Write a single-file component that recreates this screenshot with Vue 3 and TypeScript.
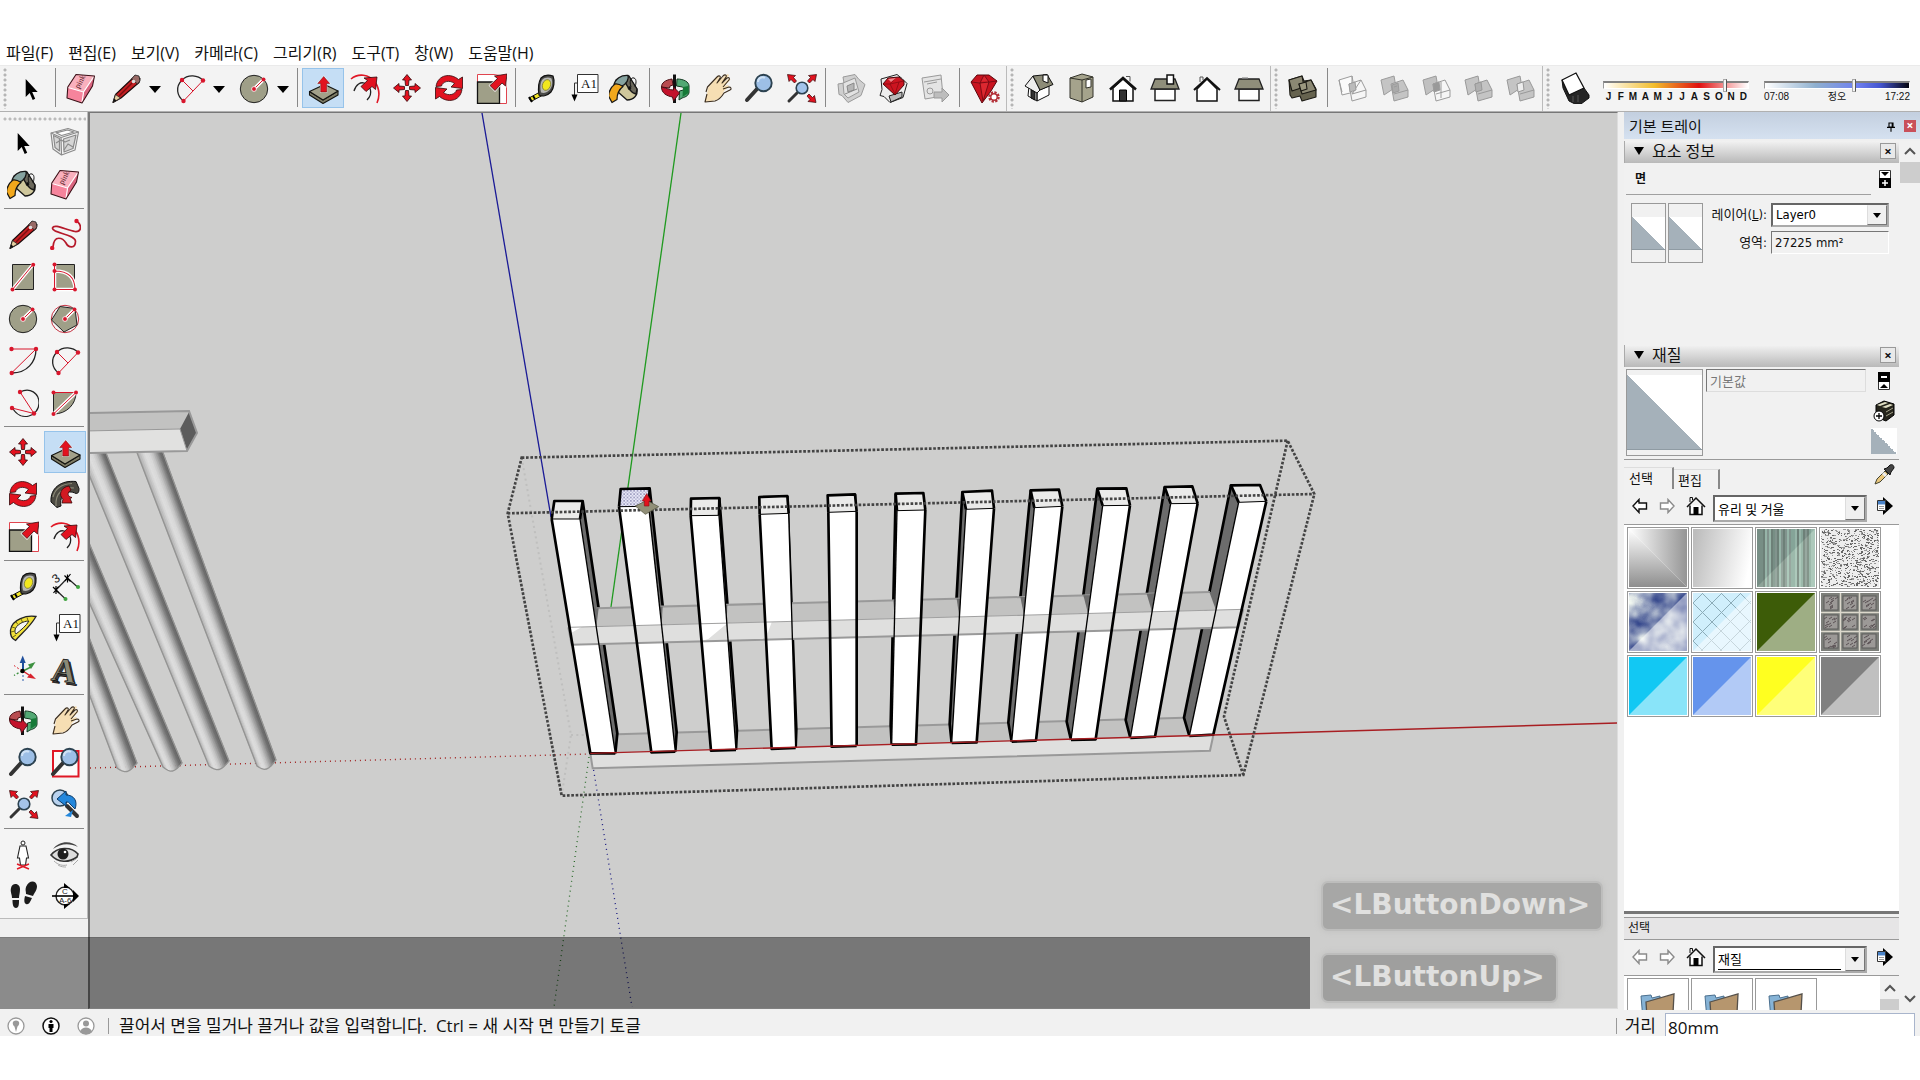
<script setup lang="ts">
import { ref } from 'vue'

interface Tool { icon: string; label: string; active?: boolean; menu?: boolean }
type Point = [number, number]

const menus = ['파일(F)', '편집(E)', '보기(V)', '카메라(C)', '그리기(R)', '도구(T)', '창(W)', '도움말(H)']

const t = (icon: string, label: string, extra: Partial<Tool> = {}): Tool => ({ icon, label, ...extra })

// Each bar is split by a grip, and each bar is made of groups split by a rule.
const bars: Tool[][][] = [
  [
    [t('select', '선택')],
    [t('eraser', '지우개'), t('pencil', '선', { menu: true }), t('arc', '호', { menu: true }), t('circle', '원', { menu: true })],
    [t('pushpull', '밀기/끌기', { active: true }), t('offset', '오프셋'), t('move', '이동'), t('rotate', '회전'), t('scale', '배율')],
    [t('tape', '줄자'), t('text', '텍스트'), t('bucket', '페인트 통')],
    [t('orbit', '궤도'), t('hand', '이동 보기'), t('zoom', '확대/축소'), t('extents', '범위 확대')],
    [t('wareoff', '모델 가져오기'), t('ware', '웨어하우스'), t('share', '모델 공유')],
    [t('ruby', '확장 프로그램')],
  ],
  [[t('iso', '등각'), t('top', '평면'), t('front', '정면'), t('right', '우측면'), t('back', '후면'), t('left', '좌측면')]],
  [
    [t('shell', '외부 셸')],
    [t('solid1', '교차'), t('solid2', '결합'), t('solid3', '빼기'), t('solid4', '다듬기'), t('solid5', '분할')],
  ],
  [[t('shadow', '그림자')]],
]

const palette: Tool[][] = [
  [t('select', '선택'), t('component', '구성 요소'), t('bucket', '페인트 통'), t('eraser', '지우개')],
  [t('pencil', '선'), t('freehand', '자유 곡선'), t('rect', '사각형'), t('rotrect', '회전 사각형'), t('circle', '원'), t('polygon', '다각형'),
    t('arc1', '호'), t('arc', '2점 호'), t('arc3', '3점 호'), t('pie', '파이')],
  [t('move', '이동'), t('pushpull', '밀기/끌기', { active: true }), t('rotate', '회전'), t('follow', '따라가기'), t('scale', '배율'), t('offset', '오프셋')],
  [t('tape', '줄자'), t('dimension', '치수'), t('protractor', '각도기'), t('text', '텍스트'), t('axes', '축'), t('text3d', '3D 텍스트')],
  [t('orbit', '궤도'), t('hand', '이동 보기'), t('zoom', '확대/축소'), t('zoomwin', '창 확대'), t('extents', '범위 확대'), t('previous', '이전')],
  [t('camera', '카메라 배치'), t('eye', '둘러보기'), t('walk', '걷기'), t('section', '단면')],
]

const months = 'JFMAMJJASOND'.split('')
const month = ref(85)
const hour = ref(62)
const layer = ref('Layer0')
const library = ref('유리 및 거울')
const library2 = ref('재질')
const materialName = ref('기본값')
const distance = ref('80mm')

// Fence pickets, in thirds of a pixel: back-left, back-right, front-right, front-left of the
// top; left and right of the foot; rear corner of the foot on the visible side.
const pickets: Point[][] = [
  [[163, 243], [248, 243], [240, 297], [155, 297], [271, 1000], [346, 1000], [352, 940]],
  [[362, 207], [449, 205], [446, 259], [357, 260], [454, 997], [526, 995], [530, 936]],
  [[573, 236], [658, 234], [657, 286], [572, 287], [633, 992], [708, 990], [711, 930]],
  [[778, 231], [862, 228], [866, 280], [779, 283], [815, 987], [887, 984], [889, 928]],
  [[983, 226], [1065, 223], [1070, 274], [985, 277], [995, 980], [1070, 978], [1070, 925]],
  [[1187, 221], [1270, 219], [1276, 270], [1191, 272], [1175, 974], [1248, 973], [1172, 915]],
  [[1387, 216], [1476, 212], [1482, 265], [1398, 268], [1355, 969], [1430, 967], [1349, 912]],
  [[1592, 211], [1677, 209], [1687, 259], [1603, 263], [1535, 965], [1608, 962], [1525, 908]],
  [[1792, 206], [1879, 205], [1890, 256], [1808, 257], [1713, 960], [1787, 958], [1700, 905]],
  [[1994, 201], [2077, 199], [2093, 250], [2012, 251], [1891, 954], [1965, 950], [1877, 900]],
  [[2193, 196], [2280, 195], [2299, 244], [2216, 247], [2068, 948], [2140, 944], [2052, 893]],
]
const pts = (list: Point[]): string => list.map(p => p.join(',')).join(' ')
const rearY = (x: number): number => 565 - (x - 290) * 0.0266
const midY = (x: number): number => 622 - (x - 205) * 0.0267
const meet = (a: Point, b: Point, line: (x: number) => number): Point => {
  let lo = 0
  let hi = 1
  for (let i = 0; i < 20; i++) {
    const m = (lo + hi) / 2
    const x = a[0] + (b[0] - a[0]) * m
    if (a[1] + (b[1] - a[1]) * m < line(x)) lo = m
    else hi = m
  }
  return [Math.round(a[0] + (b[0] - a[0]) * lo), Math.round(a[1] + (b[1] - a[1]) * lo)]
}
const posts = pickets.map((p, i) => {
  const [bl, br, fr, fl, footL, footR, rear] = p
  const leftSide = i > 4
  const back = leftSide ? bl : br
  const front = leftSide ? fl : fr
  const foot = leftSide ? footL : footR
  return {
    side: pts([back, front, foot, rear]),
    sideEdge: pts([back, rear, foot]),
    wedge: pts([meet(back, rear, rearY), meet(front, foot, rearY), meet(front, foot, midY)]),
    top: pts([bl, br, fr, fl]),
    face: pts([fl, fr, footR, footL]),
    crown: pts([fl, bl, br, fr]),
    bold: pts(leftSide ? [fr, footR, footL] : [fl, footL, footR]),
    thin: pts([front, foot]),
    lip: pts([fl, fr]),
    selected: i === 1,
    both: i === 4,
  }
})

// Round bars of the bench: left edge top/bottom and right edge top/bottom, shaded in strips.
const shade: [number, number][] = [[0, 168], [0.12, 192], [0.3, 222], [0.45, 219], [0.6, 196], [0.75, 155], [0.88, 112], [1, 98]]
const tone = (v: number): string => {
  let k = 1
  while (k < shade.length - 1 && shade[k][0] < v) k++
  const [a, ca] = shade[k - 1]
  const [b, cb] = shade[k]
  const c = Math.round(ca + (cb - ca) * ((v - a) / (b - a)))
  return `rgb(${c},${c},${c})`
}
const rodEdges: Point[][] = [
  [[10, 484], [117, 768], [10, 430], [137, 763]],
  [[36, 484], [163, 767], [51, 453], [182, 763]],
  [[80, 453], [209, 766], [106, 453], [229, 761]],
  [[136, 450], [257, 766], [162, 450], [276, 760]],
]
const STRIPS = 14
const rods = rodEdges.map(([lt, lb, rt, rb]) => {
  const at = (a: Point, b: Point, v: number, drop: number): Point =>
    [a[0] + (b[0] - a[0]) * v, a[1] + (b[1] - a[1]) * v + drop * Math.sin(Math.PI * v)]
  const strips = Array.from({ length: STRIPS }, (_, i) => {
    const a = i / STRIPS
    const b = (i + 1) / STRIPS
    return { fill: tone((a + b) / 2), points: pts([at(lt, rt, a, 0), at(lt, rt, b, 0), at(lb, rb, b, 6), at(lb, rb, a, 6)]) }
  })
  const cap = Array.from({ length: 9 }, (_, i) => at(lb, rb, i / 8, 6))
  return { strips, outline: pts([lt, ...cap, rt]) }
})

let seed = 7
const rnd = (): number => {
  seed = (seed * 16807) % 2147483647
  return seed / 2147483647
}
const specks = Array.from({ length: 780 }, () => ({ x: Math.floor(rnd() * 58), y: Math.floor(rnd() * 58), w: rnd() > 0.6 ? 2 : 1, c: rnd() > 0.5 ? '#666' : '#999' }))
const stripes = Array.from({ length: 29 }, (_, i) => ({ x: i * 2, c: ['#73877c', '#8fb0a0', '#a2c2b2', '#7f978a', '#8a9c93'][Math.floor(rnd() * 5)] }))
const blocks = Array.from({ length: 9 }, (_, i) => ({
  x: (i % 3) * 19 + 3, y: Math.floor(i / 3) * 19 + 3,
  marks: Array.from({ length: 10 }, () => `M${(rnd() * 11).toFixed(0)} ${(rnd() * 11 + 3).toFixed(0)}l3 -2`).join(''),
}))
const materials = ['회색 유리', '거울', '골판 유리', '얼룩 유리', '하늘 반사', '격자 유리', '녹색 유리', '유리 블록', '하늘색', '파란색', '노란색', '회색']
const flat: Record<number, string> = { 6: '#3d5c08', 8: '#12c8f3', 9: '#6594ec', 10: '#ffff20', 11: '#808080' }
</script>

<template>
  <div class="app">
    <svg class="defs" width="0" height="0" aria-hidden="true">
      <defs>
        <pattern id="dots" width="10" height="10" patternUnits="userSpaceOnUse">
          <rect width="10" height="10" fill="#e9e9f8" /><rect width="3" height="3" x="1" y="1" fill="#1c1c60" /><rect width="3" height="3" x="6" y="6" fill="#7777aa" />
        </pattern>
        <linearGradient id="g1" x1="0" x2="1" y1="0" y2="0"><stop offset="0" stop-color="#fff" /><stop offset="1" stop-color="#959595" /></linearGradient>
        <linearGradient id="g2" x1="0" x2="0" y1="0" y2="1"><stop offset="0" stop-color="#fff" /><stop offset="1" stop-color="#8e8e8e" /></linearGradient>
        <linearGradient id="g3" x1="0" x2="1" y1="0.3" y2="0.5"><stop offset="0" stop-color="#bdbdbd" /><stop offset="1" stop-color="#fff" /></linearGradient>
        <filter id="cloud" x="0" y="0" width="1" height="1" color-interpolation-filters="sRGB">
          <feTurbulence type="fractalNoise" baseFrequency="0.04" numOctaves="3" seed="4" />
          <feColorMatrix values="1.5 0 0 0 -0.22  1.4 0 0 0 -0.12  0.8 0 0 0 0.32  0 0 0 0 1" />
        </filter>
      </defs>
    </svg>
    <svg class="symbols" aria-hidden="true">
      <symbol id="i-select" viewBox="0 0 32 32"><path d="M10.700 7V25l4-4 3 7 2.500-1.200-3-6.800h5.500z" fill="#000" /></symbol>
      <symbol id="i-component" viewBox="0 0 32 32">
        <g fill="#f4f4f4" stroke="#8a8a8a" stroke-width="1.200" stroke-linejoin="round">
          <path d="M2 7L19 2.500 29.500 6 26 24 12.500 29 4 23z" /><path d="M2 7l10 4.500L29.500 6M12 11.500l.5 17.500" /><path d="M4.500 9.500l6 3v12.500l-4.500-3.500zM14.500 13l12.500-4-3 13.500-9 3.500z" fill="#d5d5d5" />
          <path d="M7 6.800L18.500 4l6.500 2-12.500 3.500z" fill="#fff" /><path d="M7 17l5-3 4 2 5-2M15 24l4-6 5 3" fill="none" />
        </g>
      </symbol>
      <symbol id="i-bucket" viewBox="0 0 32 32">
        <g stroke="#161616" stroke-width="1.300" stroke-linejoin="round">
          <path d="M7 8L19 3.500 28 17c1 6-3 11-10 11L9 20z" fill="#cfc79c" /><path d="M16 8l4-4 8 13-1 5c-5-1-10-8-11-14z" fill="#6b685c" />
          <path d="M5 13C6 7 12 3 19 3.500c1 3-1 9-7 11z" fill="#86a3a0" /><path d="M6 12C2 15 0 18-.5 24L3 30.500l5-3c0-6 2-10 6-13-3-2-5-3-8-2.500z" fill="#f2a81c" />
          <path d="M22 15c-2-6 0-10 3-9s2 6 1 9" fill="none" stroke-width="1" /><circle cx="20.500" cy="16" r="1.200" />
        </g>
      </symbol>
      <symbol id="i-eraser" viewBox="0 0 32 32">
        <g stroke-linejoin="round"><path d="M11 2.500L29.500 4l-2 10L17 31 2 26l.8-11z" fill="#f6849c" /><path d="M11 2.500L29.500 4 19 20 2.800 15z" fill="#f9b0bd" />
          <path d="M17 31l2-11 10-15.500-1.500 9.500z" fill="#d9657f" /><path d="M3 15.500L18.500 20 29 4.500M18.500 20.500L17 30.500" fill="none" stroke="#fff" stroke-width="1.200" />
          <path d="M11 2.500L29.500 4l-2 10L17 31 2 26l.8-11z" fill="none" stroke="#3a1218" stroke-width="1.100" /></g>
        <text x="0" y="0" transform="translate(14 17) rotate(-62)" font-family="Liberation Serif, serif" font-size="8" fill="#5a1c28">pink</text>
      </symbol>
      <symbol id="i-pencil" viewBox="0 0 32 32">
        <path d="M25 4l5 2.500-1 4L11 26l-8 4.500 2.500-8z" fill="#c51f22" stroke="#1b0b0b" stroke-width="1.100" stroke-linejoin="round" /><path d="M5.500 22.500l5 3.500L3 30.500z" fill="#e6cfa0" stroke="#222" stroke-width=".8" /><path d="M3 30.500l1.200-4 2.300 2z" fill="#111" />
        <path d="M21.500 7l6 5L30 9l-1-5-4-1z" fill="#996a66" stroke="#222" stroke-width=".8" /><path d="M22 11L9 24" stroke="#7c0d10" stroke-width="1.500" /><circle cx="23.500" cy="9.500" r="1.800" fill="#ddd" />
      </symbol>
      <symbol id="i-freehand" viewBox="0 0 32 32"><path d="M27.500 3C33 7 33 14 26 13.500 18 12.500 5 5 3.500 10c-1 5 22 6 23 13 0 8-7 7-9.500 2-3-5-12-9-13 4" fill="none" stroke="#b5192a" stroke-width="1.700" /><circle cx="27.500" cy="3" r="2.200" fill="#d8162c" /><circle cx="3.200" cy="30" r="2.200" fill="#d8162c" /></symbol>
      <symbol id="i-rect" viewBox="0 0 32 32"><path d="M5.500 4.500h21v25h-21z" fill="#9f9f88" stroke="#222" /><path d="M26 4.500L5.500 29.500" stroke="#fff" stroke-width="3.500" /><path d="M26 4.500L5.500 29.500" stroke="#d8162c" /><circle cx="26.200" cy="4.700" r="2" fill="#d8162c" /><circle cx="5.500" cy="29.500" r="2" fill="#d8162c" /></symbol>
      <symbol id="i-rotrect" viewBox="0 0 32 32"><path d="M5.500 4.500h20v25h-20z" fill="#9f9f88" stroke="#222" /><path d="M5.500 4v25.500H26C26 17 19 11 5.500 11" fill="none" stroke="#fff" stroke-width="3.500" /><path d="M5.500 4v25.500H26C26 17 19 11 5.500 11" fill="none" stroke="#d8162c" stroke-width="1.100" /><g fill="#d8162c"><circle cx="5.500" cy="4.500" r="2" /><circle cx="5.500" cy="11" r="2" /><circle cx="5.500" cy="29.500" r="2" /><circle cx="26" cy="29.500" r="2" /></g></symbol>
      <symbol id="i-circle" viewBox="0 0 32 32"><circle cx="16" cy="17" r="13.700" fill="#9f9f88" stroke="#222" /><path d="M16 17l9.500-9.500" stroke="#fff" stroke-width="3.500" /><path d="M16 17l9.500-9.500" stroke="#d8162c" /><circle cx="16" cy="17" r="2.400" fill="#d8162c" stroke="#fff" stroke-width=".8" /><circle cx="25.500" cy="7.500" r="2" fill="#d8162c" /></symbol>
      <symbol id="i-polygon" viewBox="0 0 32 32"><circle cx="16" cy="17" r="13.700" fill="#f4f4f4" stroke="#c53040" /><path d="M11 4.500l15 2L28 23l-13 7L2.500 18z" fill="#9f9f88" stroke="#222" /><path d="M16 17l9.500-9.500" stroke="#fff" stroke-width="3.500" /><path d="M16 17l9.500-9.500" stroke="#d8162c" /><circle cx="16" cy="17" r="2.400" fill="#d8162c" stroke="#fff" stroke-width=".8" /><circle cx="25.500" cy="7.500" r="2" fill="#d8162c" /></symbol>
      <symbol id="i-arc1" viewBox="0 0 32 32"><path d="M29 5c0 13-9 24-24 24" fill="none" stroke="#222" stroke-width="1.300" /><path d="M4.500 5H29L4.500 29" fill="none" stroke="#d8162c" /><g fill="#d8162c"><circle cx="4.500" cy="5" r="2.200" /><circle cx="29" cy="5" r="2.200" /><circle cx="4.700" cy="29" r="2.200" /></g></symbol>
      <symbol id="i-arc" viewBox="0 0 32 32"><path d="M29 8.500C24 3 14 2 8 8 1 15 3 24 9.500 29" fill="none" stroke="#222" stroke-width="1.300" /><path d="M29 8.500L9.500 29M8 8l11 11" fill="none" stroke="#d8162c" /><g fill="#d8162c"><circle cx="29" cy="8.500" r="2.200" /><circle cx="8" cy="8" r="2.200" /><circle cx="9.500" cy="29" r="2.200" /></g></symbol>
      <symbol id="i-arc3" viewBox="0 0 32 32"><path d="M13 6c10-5 19 1 19 11 0 13-18 20-26.500 5" fill="none" stroke="#222" stroke-width="1.200" /><path d="M13 6l14 21.500L5 22" fill="none" stroke="#d8162c" /><g fill="#d8162c"><circle cx="13" cy="6" r="2.200" /><circle cx="27" cy="27.500" r="2.200" /><circle cx="5" cy="22" r="2.200" /></g></symbol>
      <symbol id="i-pie" viewBox="0 0 32 32"><path d="M4.500 6.500H27C27 18 18 28 4.500 28z" fill="#9f9f88" stroke="#222" /><path d="M4.500 6.500H27" stroke="#d8162c" /><path d="M27 6.500L4.500 28" stroke="#fff" stroke-width="3.500" /><path d="M27 6.500L4.500 28" stroke="#d8162c" /><g fill="#d8162c"><circle cx="4.500" cy="6.500" r="2" /><circle cx="27" cy="6.500" r="2" /><circle cx="4.500" cy="28" r="2" /></g></symbol>
      <symbol id="i-pushpull" viewBox="0 0 32 32"><g stroke="#141410" stroke-width="1.100" stroke-linejoin="round"><path d="M2.500 19.500l13.500 8.500 15-9v4L16 31.500 2.500 23z" fill="#7d7b65" /><path d="M2.500 19.500L17.500 12.500 31 19 16 28z" fill="#a3a18a" /></g><path d="M16.700 4.500l6 7h-3v8.500h-6v-8.500h-3z" fill="#e2121f" stroke="#fff" stroke-width="1.200" /><path d="M16.700 4.500l6 7h-3v8.500h-6v-8.500h-3z" fill="#e2121f" stroke="#5c0a0e" stroke-width=".5" /></symbol>
      <symbol id="i-move" viewBox="0 0 32 32"><g fill="#e2121f" stroke="#31080a" stroke-width=".8"><path d="M16 2.500l4.500 5.500H18l-.5 5.500h-3L14 8h-2.500z" /><path d="M16 29.500l4.500-5.500H18l-.5-5.500h-3L14 24h-2.500z" /><path d="M2.500 16l5.500-4.500V14l5.500.5v3L8 18v2.500z" /><path d="M29.500 16L24 11.500V14l-5.500.5v3l5.500.5v2.500z" /></g></symbol>
      <symbol id="i-rotate" viewBox="0 0 32 32"><g fill="#e2121f" stroke="#31080a" stroke-width=".8" stroke-linejoin="round"><path d="M3 14.500C5 2 18 1 25.500 7.500L29.500 5v11.500L18 15l3.500-3.500c-5-4-12-2-13 2.500z" /><path d="M29 17.500C27 30 14 31 6.500 24.500L2.500 27V15.500L14 17l-3.500 3.500c5 4 12 2 13-2.500z" /></g></symbol>
      <symbol id="i-follow" viewBox="0 0 32 32"><path d="M2 24C1 10 12 2 27 3.500l3 7c0 4-1 5-3 5C18 11 10 17 12 28l-4 1.500z" fill="#4c4a42" stroke="#111" /><path d="M4 19c2-8 9-13 19-13.500M7 28C6 15 14 9 25 10" fill="none" stroke="#8c8a78" stroke-width="1.200" /><path d="M20 8c-8 1-11 9-6 13l-1 4h10l-2-4.500 2-1c-5-1-5-5-1-7.500z" fill="#d21a22" stroke="#3a0709" stroke-width=".8" /></symbol>
      <symbol id="i-scale" viewBox="0 0 32 32"><path d="M2.500 2.500h29v29h-29z" fill="#fff" stroke="#e0454f" /><path d="M2.500 10h22v21.500h-22z" fill="#9f9f88" stroke="#111" stroke-width="1.300" /><path d="M32 2l-1.500 12-3.500-3-7 7.500-5-5 7.500-7L19.500 4z" fill="#e2121f" stroke="#fff" stroke-width="2" /><path d="M32 2l-1.500 12-3.500-3-7 7.500-5-5 7.500-7L19.500 4z" fill="#e2121f" stroke="#31080a" stroke-width=".8" /></symbol>
      <symbol id="i-offset" viewBox="0 0 32 32"><path d="M2 7C9 1 20 2 26 10c4 6 5 14 2 21" fill="none" stroke="#e01826" stroke-width="1.600" /><path d="M5 19c2-7 7-9 10-8 6 2 10 10 3 17" fill="none" stroke="#222" stroke-width="1.300" /><path d="M28 5l-1.500 12.500-3.500-3-6 5-5-5 6.500-6L15 6z" fill="#e2121f" stroke="#31080a" stroke-width=".8" /></symbol>
      <symbol id="i-tape" viewBox="0 0 32 32"><path d="M15 20l3 3L6 29.500 4 26z" fill="#f1e528" stroke="#111" /><path d="M4 25l3 5M8 24l2 3" stroke="#000" stroke-width="2" /><path d="M16 6c4-4 9-3 12-2 2 5 1 12-2 16-4 4-9 5-12 3-1-6-1-12 2-17z" fill="#4a4a48" stroke="#111" stroke-width="1.200" /><path d="M17 8c3-3 7-3 9.500-1.500C28 11 27 15 24.500 18c-3 3-6 3.500-8.500 2.500-1-4-1-9 1-12.500z" fill="#b7b7b3" /><ellipse cx="21.500" cy="13" rx="4" ry="5.500" transform="rotate(20 21.500 13)" fill="#f2e71e" stroke="#77752b" stroke-width=".7" /></symbol>
      <symbol id="i-dimension" viewBox="0 0 32 32"><path d="M18.500 8L7 20" stroke="#222" stroke-width="1.200" /><path d="M18.500 8l10 9M7 20l9.500 9" stroke="#222" stroke-width="1.200" /><path d="M15.500 5.500l6 6M16 11l5.500-7M18.500 4.500v8M4 17l6 6M4.500 23l5-6.500M7 16v8" stroke="#000" stroke-width="1.200" /><circle cx="29" cy="17" r="2" fill="#3fa43f" /><circle cx="16.500" cy="29" r="2" fill="#3fa43f" /><text x="4" y="12" transform="rotate(-35 8 9)" font-family="Liberation Sans, sans-serif" font-size="12" fill="#222">3</text></symbol>
      <symbol id="i-protractor" viewBox="0 0 32 32"><path d="M29 4.500C20 3 5 7 3.500 18c-.5 5 2 9 5 10.500C14 22 23 15 29 4.500z" fill="#f0e03a" stroke="#222" stroke-width="1.300" /><path d="M22 9C16 9 9 13 8 18c0 2 0 3 1 4 5-4 10-8 13-13z" fill="#f5f5f3" stroke="#222" /><path d="M20 5.500l1 3M14 7l1.500 3M9 10l2 2.500M5 15l3 1M4 20l4-1M6 25l3-2" stroke="#6c6410" /></symbol>
      <symbol id="i-text" viewBox="0 0 32 32"><path d="M10.500 2.500h20.500v18H10.500z" fill="#fff" stroke="#333" /><path d="M10.500 11H7.500v13" fill="none" stroke="#333" /><path d="M4.500 22.500h6l-3 7z" fill="#000" /><text x="14" y="15.500" font-family="Liberation Serif, serif" font-size="13" fill="#111">A1</text></symbol>
      <symbol id="i-axes" viewBox="0 0 32 32"><path d="M16 17V7" stroke="#1f4f9c" stroke-width="2" /><path d="M12.700 9h6L15.700 1.500z" fill="#1f4f9c" /><path d="M16 17v10" stroke="#2c5cab" stroke-dasharray="2 2" /><path d="M16 17l8-4" stroke="#3d9140" stroke-width="1.500" /><path d="M21 10.500l7.500-2.500-4.500 7z" fill="#3d9140" /><path d="M15 17l-8 4.500" stroke="#3d9140" stroke-width="1.400" stroke-dasharray="2 2" /><path d="M16 17l9 6" stroke="#d8222c" stroke-width="1.500" /><path d="M20 23.500l9 1.500-5.500-5.500z" fill="#d8222c" /><path d="M15 17l-8-5.500" stroke="#d8222c" stroke-dasharray="2 2" /><circle cx="15.500" cy="17" r="2.200" fill="#000" /></symbol>
      <symbol id="i-text3d" viewBox="0 0 32 32"><g font-family="Liberation Serif, serif" font-weight="700" font-size="34" stroke="#111" stroke-width=".8"><text x="5" y="30" fill="#444" transform="rotate(8 16 16)">A</text><text x="3" y="28" fill="#8a8976" transform="rotate(8 16 16)">A</text></g></symbol>
      <symbol id="i-orbit" viewBox="0 0 32 32"><path d="M14 2.500h3V31h-3z" fill="#111" /><path d="M18 7c7 0 12 3 12 7v6c0 3-3 5-7 6l-3 2 .5-9 4-1c1-1 0-2-1-3l-6-1z" fill="#52a874" stroke="#143a22" /><path d="M24 15l5.500-1v7l-6 4z" fill="#167a38" /><path d="M13 7C6 8 2.500 11 2.500 15l8 1 .5-2 3-1z" fill="#b84c50" stroke="#4a1015" /><path d="M2.500 15c0 6 5 9 11 10l1 4 6-8-6-6v3c-4 0-7-2-12-3z" fill="#c3122b" stroke="#4a1015" /></symbol>
      <symbol id="i-hand" viewBox="0 0 32 32"><path d="M4 30l2-8 1-6L16 5l3-1-3 6 9-7 2-1 1 1.500-7 8 7-5 1.500 1-6.500 7 4-1.500 1 1-5 5c-3 8-8 10-15 10z" fill="#f6deb3" /><path d="M5 20L6.500 15 16 5c2-2 4-1 3 1l-3 5 6-7c2-2 4-1 3 1l-4 6 5-5c2-1 3 0 2 2l-6 7M22 17l6-2c2 0 3 2 1 3l-6 3c-3 5-6 7-9 8l-10 1 2-8" fill="none" stroke="#3a2c1c" stroke-width="1.100" stroke-linejoin="round" /></symbol>
      <symbol id="i-zoom" viewBox="0 0 32 32"><path d="M14 17L4 28" stroke="#333" stroke-width="4" stroke-linecap="round" /><circle cx="20.500" cy="11" r="8.200" fill="#9dbfe6" stroke="#2c4250" stroke-width="1.900" /><path d="M15 10c0-4 4-6 7-4" stroke="#cfe2f6" stroke-width="2" fill="none" /></symbol>
      <symbol id="i-zoomwin" viewBox="0 0 32 32"><path d="M4 5h25.500v25.500H4z" fill="#fbfbfb" stroke="#e01826" stroke-width="2" /><path d="M14 17L4 28" stroke="#333" stroke-width="4" stroke-linecap="round" /><circle cx="20.500" cy="11" r="8.200" fill="#9dbfe6" stroke="#2c4250" stroke-width="1.900" /><path d="M15 10c0-4 4-6 7-4" stroke="#cfe2f6" stroke-width="2" fill="none" /></symbol>
      <symbol id="i-extents" viewBox="0 0 32 32"><path d="M12 21L4 29" stroke="#333" stroke-width="3" stroke-linecap="round" /><circle cx="17" cy="16" r="5.800" fill="#a4c4ea" stroke="#2c4250" stroke-width="1.600" /><g fill="#e2121f" stroke="#31080a" stroke-width=".7"><path d="M2.500 2.500l8 1-2 2 3 3.500-2 2L6 7.500l-2 2z" /><path d="M31.500 2.500l-8 1 2 2-3 3.500 2 2L28 7.500l2 2z" /><path d="M31 30.500l-8-1 2-2-3-3.500 2-2 3.500 3.500 2-2z" /></g></symbol>
      <symbol id="i-previous" viewBox="0 0 32 32"><circle cx="11" cy="10" r="8" fill="#b9d2ee" stroke="#2c4250" stroke-width="1.500" /><path d="M18 18l10 10" stroke="#333" stroke-width="4" stroke-linecap="round" /><path d="M8 11l9-8v4c8 0 12 6 9 14l-5-5c-1-2-2-2-4-2v4z" fill="#2387dc" stroke="#0d3b68" /><path d="M16 28l8-6-2 7z" fill="#2387dc" /></symbol>
      <symbol id="i-wareoff" viewBox="0 0 32 32"><g fill="#cfcfcf" stroke="#9a9a9a" stroke-linejoin="round"><path d="M3 12l6-1-1-6 12-2.500 4 5 6 5-4 11-13 7-6-7-3-1z" /><path d="M8 11l12-5 4 14-11 6-4-4z" fill="#e2e2e2" /><path d="M12 14l7-3v7l-6 2zM10 22l12-5" fill="#b5b5b5" stroke="#888" /></g></symbol>
      <symbol id="i-ware" viewBox="0 0 32 32"><g fill="#eee" stroke="#222" stroke-linejoin="round"><path d="M4 7L20 2.500l5 4 5 5-4 14-13 5-6-6-4-1 2-6z" /><path d="M12 24l13-4v5l-11 5z" fill="#bbb" /></g><path d="M6 12l5-6 11-1 5 4 0 4-9 10z" fill="#cc1420" stroke="#4a070b" /><path d="M6 12l7 0 6-6.500M13 12l5 10 4-12-9 2M22 10l5-1" fill="none" stroke="#8a0a12" stroke-width=".8" /><path d="M11 7l8-1-5 4z" fill="#f0848a" /></symbol>
      <symbol id="i-share" viewBox="0 0 32 32"><g fill="#e4e4e4" stroke="#9a9a9a"><path d="M3 6l19-3 2 21-18 3z" /><path d="M5 10l17-3M8 12l10-2" /><path d="M15 20h8v-4l7 7-7 7v-4h-8z" fill="#bdbdbd" /><circle cx="11" cy="19" r="3" /></g></symbol>
      <symbol id="i-ruby" viewBox="0 0 32 32"><path d="M2 10l6-7h12l8 6-6 10-9 12z" fill="#c9131f" stroke="#5a070d" stroke-linejoin="round" /><path d="M2 10l9 1 4-8 5 7 8-1M11 11l3 18 6-19z" fill="#dc2830" stroke="#6a0810" stroke-width=".8" /><circle cx="25" cy="25" r="4.500" fill="none" stroke="#b33038" stroke-width="2.500" stroke-dasharray="2.200 1.300" /><circle cx="25" cy="25" r="3.200" fill="#fff" stroke="#b33038" stroke-width="1.400" /></symbol>
      <symbol id="i-iso" viewBox="0 0 32 32"><g stroke="#111" stroke-linejoin="round"><path d="M6 14l8 5v10l-9-5zM14 19l12-5v9l-12 6z" fill="#fff" /><path d="M2 14L10 4l7 14-3 3z" fill="#eee" /><path d="M10 4l14-1.500 6 10L17 18z" fill="#8d8c78" /><path d="M20 3h5v8l-5-2z" fill="#fff" /><path d="M8 18l4 2v8l-4-2z" fill="#333" /></g></symbol>
      <symbol id="i-top" viewBox="0 0 32 32"><g stroke="#33332a" stroke-linejoin="round"><path d="M5 6l12-4 11 3v20l-11 5-12-4z" fill="#a5a38c" /><path d="M17 8v22M5 6l12 2 11-3" fill="none" /><path d="M21 8l5-1v8l-5 1z" fill="#fff" /></g></symbol>
      <symbol id="i-front" viewBox="0 0 32 32"><path d="M6 16L16 7l10 9v13H6z" fill="#fff" stroke="#111" stroke-width="1.500" /><path d="M3 17.500L16 6l13 11.500" fill="none" stroke="#111" stroke-width="2.500" /><path d="M12.500 18h7v11h-7z" fill="#333" stroke="#000" /><path d="M19 4.500h4v5" fill="none" stroke="#555" /></symbol>
      <symbol id="i-right" viewBox="0 0 32 32"><path d="M6 17h20v11.500H6z" fill="#fff" stroke="#222" stroke-width="1.500" /><path d="M6 7h20l4 10H2z" fill="#8f8e7a" stroke="#222" stroke-width="1.300" /><path d="M18 3h6.500v9H18z" fill="#fff" stroke="#111" stroke-width="1.500" /></symbol>
      <symbol id="i-back" viewBox="0 0 32 32"><path d="M6 17L16 7l10 10v12H6z" fill="#fff" stroke="#111" stroke-width="1.500" /><path d="M3 18L16 6l13 12" fill="none" stroke="#111" stroke-width="2" /><path d="M9 10V5h3v3" fill="none" stroke="#555" /></symbol>
      <symbol id="i-left" viewBox="0 0 32 32"><path d="M6 17h20v11.500H6z" fill="#fff" stroke="#222" stroke-width="1.500" /><path d="M6 7h20l4 10H2z" fill="#8f8e7a" stroke="#222" stroke-width="1.300" /><path d="M9 5.500h6V7H9z" fill="#777" /></symbol>
      <symbol id="i-shell" viewBox="0 0 32 32"><g stroke="#1b1a14" stroke-width="1.100" stroke-linejoin="round"><path d="M2 8l13-4 2 5 7-1 5 9v8l-14 4-2-5-8 2-2-3z" fill="#66634f" /><path d="M2 8l13-4 2 11-12 4zM12 12l12-4 5 10-14 4z" fill="#8b8873" /><path d="M12 12l7-2 1 7-6 2z" fill="#9b987f" /></g></symbol>
      <symbol id="i-solid1" viewBox="0 0 32 32"><g fill="#fafafa" stroke="#9c9c9c" stroke-linejoin="round"><path d="M2 8l13-4 2 11 0 5-12 3zM2 8l3 12M15 4v8" /><path d="M12 12l12-4 5 10v7l-14 4z" fill-opacity=".5" /><path d="M15 22l14-4M24 8l-9 14" /><path d="M12 12l6-2 1 8-6 2z" fill="#bbb" /></g></symbol>
      <symbol id="i-solid2" viewBox="0 0 32 32"><g fill="#c4c4c4" stroke="#9c9c9c" stroke-linejoin="round"><path d="M2 8l13-4 2 11-12 8z" /><path d="M12 12l12-4 5 10v7l-14 4z" /><path d="M15 22l14-4" /><path d="M13 13l6-2 1 8-6 2zM15 15l3-1" fill="#aaa" /></g></symbol>
      <symbol id="i-solid3" viewBox="0 0 32 32"><g fill="#c0c0c0" stroke="#9c9c9c" stroke-linejoin="round"><path d="M2 8l13-4 2 11-12 8z" /><path d="M12 12l12-4 5 10v7l-14 4z" fill="#f6f6f6" /><path d="M15 22l14-4M20 10v16" /><path d="M12 12l6-2 1 8-6 2z" fill="#999" /></g></symbol>
      <symbol id="i-solid4" viewBox="0 0 32 32"><g fill="#c4c4c4" stroke="#999" stroke-linejoin="round"><path d="M2 8l13-4 2 11-12 8z" /><path d="M12 12l12-4 5 10v7l-14 4z" /><path d="M15 22l14-4" /><path d="M12 12l6-2 1 8-6 2z" fill="#b0b0b0" /></g></symbol>
      <symbol id="i-solid5" viewBox="0 0 32 32"><g fill="#c4c4c4" stroke="#999" stroke-linejoin="round"><path d="M2 8l13-4 2 11-12 8z" /><path d="M12 12l12-4 5 10v7l-14 4z" /><path d="M15 22l14-4" /><path d="M12 12l6-2 1 8-6 2z" fill="#ededed" /></g></symbol>
      <symbol id="i-shadow" viewBox="0 0 32 32"><path d="M3 8l1 8 6 13 6 3h6l8-6v-3L25 16z" fill="#262626" stroke="#111" /><path d="M3 8l14-7 8 15-15 7z" fill="#fff" stroke="#111" stroke-width="1.300" stroke-linejoin="round" /><path d="M14 24v6M19 23v7" stroke="#555" /></symbol>
      <symbol id="i-camera" viewBox="0 0 32 32"><circle cx="16" cy="5" r="2" fill="#fff" stroke="#222" /><path d="M13 8h6l2.500 12h-2l-1 7h-5l-1-7h-2z" fill="#fff" stroke="#222" stroke-width="1.100" /><path d="M10 26l12 5M22 26l-12 5" stroke="#e01826" stroke-width="1.400" /></symbol>
      <symbol id="i-eye" viewBox="0 0 32 32"><path d="M4 11C10 3 22 2 29 9c-8-4-17-4-25 2z" fill="#444" /><path d="M2 17c6-8 20-9 27-1l-1 3c-8 6-19 6-26-2z" fill="#ddd" stroke="#333" stroke-width="1.600" /><circle cx="14" cy="16" r="5.500" fill="#1e1e1e" /><circle cx="16" cy="14" r="1.300" fill="#fff" /><path d="M5 23c4 4 9 5 13 4M9 27c3 2 6 2 8 2M22 24l5-3M24 27l5-5" fill="none" stroke="#aaa" /></symbol>
      <symbol id="i-walk" viewBox="0 0 32 32"><g fill="#1b1b1b"><path d="M4 8c1-6 9-5 9 1 0 4-1 6-1 9H5c0-4-2-6-1-10zM5.500 20H12c0 4 0 8-3 8s-3.500-4-3.500-8z" /><path d="M19 7c3-7 10-7 11-1 0 5-3 7-4 10l-7-2c0-3-1-4 0-7zM18 16l7 2c-2 4-3 7-6 6-2-1-2-4-1-8z" /></g></symbol>
      <symbol id="i-section" viewBox="0 0 32 32"><circle cx="16" cy="16" r="9" fill="#fff" stroke="#222" stroke-width="1.400" /><path d="M15 3l6 5h-6zM15 29l6-5h-6zM24 10l6 6-6 6z" fill="#000" /><path d="M3 16h26" stroke="#000" stroke-width="1.600" /><g font-family="Liberation Sans, sans-serif" font-size="8" fill="#222"><text x="13" y="14">C</text><text x="10" y="23">A-6</text></g></symbol>
      <symbol id="i-home" viewBox="0 0 20 20"><path d="M4 9.500v9h12v-9" fill="#fff" stroke="#111" stroke-width="1.500" /><path d="M1 11l9-9 9 9" fill="none" stroke="#111" stroke-width="1.500" /><path d="M7.500 11h5v8h-5z" fill="#000" /><path d="M4 6V1.500h2.500V4" fill="none" stroke="#111" /></symbol>
      <symbol id="i-prev" viewBox="0 0 16 16"><path d="M1 8l6-6.500V5h7.500v6H7v3.500z" fill="#fff" stroke="currentColor" stroke-width="1.400" /></symbol>
      <symbol id="i-next" viewBox="0 0 16 16"><path d="M15 8L9 1.500V5H1.500v6H9v3.500z" fill="#fff" stroke="currentColor" stroke-width="1.400" /></symbol>
      <symbol id="i-detail" viewBox="0 0 18 18"><path d="M7 0l10 9-10 9z" fill="#000" /><path d="M1.500 3.500h8v10h-8z" fill="#fff" stroke="#333" /><path d="M2 4h7v3.500H2z" fill="#4a83c8" /><path d="M3 9.500h5M3 11.500h5" stroke="#999" /></symbol>
    </svg>

    <nav class="menubar">
      <button v-for="m in menus" :key="m" type="button">{{ m }}</button>
    </nav>

    <header class="toolbar">
      <section v-for="(bar, b) in bars" :key="b" class="bar">
        <span class="grip"></span>
        <div v-for="(group, g) in bar" :key="g" class="group">
          <template v-for="tool in group" :key="tool.icon">
            <span v-if="tool.menu" class="split">
              <button type="button" class="tool" :aria-label="tool.label"><svg><use :href="'#i-' + tool.icon" /></svg></button>
              <button type="button" class="drop" :aria-label="tool.label + ' 메뉴'"><span class="tri"></span></button>
            </span>
            <button v-else type="button" class="tool" :class="{ active: tool.active }" :aria-label="tool.label"><svg><use :href="'#i-' + tool.icon" /></svg></button>
          </template>
        </div>
      </section>
      <div class="suns">
        <label class="sun"><input v-model="month" type="range" class="year" min="0" max="100" aria-label="날짜"><span class="ticks"><b v-for="(m, i) in months" :key="i">{{ m }}</b></span></label>
        <label class="sun"><input v-model="hour" type="range" class="day" min="0" max="100" aria-label="시간"><span class="ticks time"><b>07:08</b><b>정오</b><b>17:22</b></span></label>
      </div>
    </header>

    <main class="work">
      <aside class="side">
        <div class="palette">
          <span class="hgrip"></span>
          <div v-for="(group, g) in palette" :key="g" class="rows">
            <button v-for="tool in group" :key="tool.icon" type="button" class="tool" :class="{ active: tool.active }" :aria-label="tool.label"><svg><use :href="'#i-' + tool.icon" /></svg></button>
          </div>
        </div>
      </aside>

      <section class="canvas">
        <svg class="scene" viewBox="90 113 1527 895" preserveAspectRatio="xMidYMid slice" fill="none">
          <g stroke-width="1">
            <path d="M482 113L551 517" stroke="#1a1a96" stroke-width="1.300" />
            <path d="M681 113L611 607" stroke="#1f9a1f" stroke-width="1.300" />
            <path d="M90 768L590 754" stroke="#a02020" stroke-dasharray="1 4" stroke-width="1.400" />
            <path d="M589 757L554 1007" stroke="#2a6a2a" stroke-dasharray="1 4" stroke-width="1.300" />
            <path d="M592 760L632 1007" stroke="#1a1a80" stroke-dasharray="1 4" stroke-width="1.300" />
          </g>

          <g v-for="(rod, r) in rods" :key="r">
            <polygon v-for="(s, i) in rod.strips" :key="i" :points="s.points" :fill="s.fill" :stroke="s.fill" stroke-width=".6" />
            <polyline :points="rod.outline" stroke="#949493" stroke-width="1.300" />
          </g>
          <polygon points="85,413 189,411 180,429 85,431" fill="#c2c2c1" />
          <polygon points="85,431 180,429 187,451 85,453" fill="#e1e1e0" />
          <polygon points="189,412 197,433 187,450 180,429" fill="#5c5c5c" />
          <path d="M85 413L189 411 197 433 187 451 85 453" stroke="#999" stroke-width="2" /><path d="M85 431L180 429 187 451" stroke="#999" />

          <g transform="translate(500 420) scale(.33333)">
            <path d="M65 113L213 945 185 1127M213 945H260" stroke="#bfbfbe" stroke-width="6" stroke-dasharray="6 10" />
            <polygon points="352,943 2052,893 2140,946 271,1000" fill="#c2c2c1" />
            <path d="M352 943L2052 893" stroke="#999" stroke-width="6" />
            <polygon points="271,1000 2140,946 2130,992 278,1045" fill="#dfdfde" />
            <path d="M271 1000L278 1045 2130 992 2140 946" stroke="#999" stroke-width="6" />

            <g v-for="(p, i) in posts" :key="i">
              <polygon :points="p.side" fill="#6c6c6c" />
              <polyline :points="p.sideEdge" stroke="#000" stroke-width="8" />
            </g>
            <polygon points="290,565 2130,516 2230,568 205,622" fill="#c2c2c1" />
            <path d="M290 565L2130 516" stroke="#999" stroke-width="6" />
            <g v-for="(p, i) in posts" :key="i">
              <polygon :points="p.wedge" fill="#6c6c6c" />
              <polygon :points="p.face" fill="#fff" />
              <polygon :points="p.top" :fill="p.selected ? 'url(#dots)' : '#eaeae9'" />
            </g>
            <polygon points="205,622 2230,568 2215,622 215,674" fill="#dfdfde" />
            <path d="M205 622L245 621 212 640zM603 612L682 610 625 657 607 662zM800 607H815L803 640z" fill="#fff" />
            <path d="M205 622L2230 568" stroke="#a0a0a0" stroke-width="3" />
            <path d="M205 622L215 674 2215 622 2230 568" stroke="#999" stroke-width="6" />
            <g v-for="(p, i) in posts" :key="i" stroke="#000">
              <polyline :points="p.crown" stroke-width="8" stroke-linejoin="round" />
              <polyline :points="p.bold" stroke-width="8" stroke-linejoin="round" />
              <polyline :points="p.thin" :stroke-width="p.both ? 8 : 4" />
              <polyline :points="p.lip" stroke-width="3" />
            </g>
            <path d="M271 1000L3354 909" stroke="#a81e22" stroke-width="4" />
            <g stroke="#444" stroke-width="8" stroke-dasharray="8 5">
              <path d="M65 113L2363 62 2443 222 2230 1065 185 1127 23 280z" /><path d="M23 280L2443 222" /><path d="M2363 62L2172 890 2230 1065" />
            </g>
            <g stroke="#4d4d38" stroke-width="2"><path d="M406 258l35-17 35 19-40 23z" fill="#918f78" /><path d="M440 221l13 22h-6v15h-14v-15h-6z" fill="#e2121f" stroke="#8a1218" /></g>
          </g>
        </svg>
        <div class="keys"><kbd>&lt;LButtonDown&gt;</kbd><kbd>&lt;LButtonUp&gt;</kbd></div>
      </section>

      <aside class="tray">
        <div class="traytitle"><h1>기본 트레이</h1>
          <button type="button" aria-label="고정"><svg width="8" height="10" viewBox="0 0 10 12"><path d="M2.500 1h5v5h-5zM0 6.500h10M5 7v5M6.500 1v5" fill="none" stroke="#000" stroke-width="1.400" /></svg></button>
          <button type="button" class="red" aria-label="닫기">×</button>
        </div>
        <div class="traybody">
          <div class="panels">
            <h2><span class="tri"></span>요소 정보<button type="button" aria-label="요소 정보 닫기">×</button></h2>
            <div class="entity">
              <div class="kind"><strong>면</strong>
                <button type="button" class="plain" aria-label="세부 정보"><svg width="12" height="18" viewBox="0 0 12 18"><path d="M.5.500h11v17H.5z" fill="#fff" stroke="#333" /><path d="M2 2h8L6 6z" /><path d="M0 8h12v10H0z" /><path d="M3 13h6M6 10v6" stroke="#fff" stroke-width="1.500" /></svg></button>
              </div>
              <div class="fields">
                <div class="faces"><span v-for="n in 2" :key="n" class="face"><i></i></span></div>
                <div class="form">
                  <label for="layer">레이어(<u>L</u>):</label>
                  <span class="combo small"><select id="layer" v-model="layer"><option>Layer0</option></select><span class="arrow"><i class="tri"></i></span></span>
                  <label for="area">영역:</label>
                  <input id="area" type="text" value="27225 mm²" readonly>
                </div>
              </div>
            </div>

            <h2><span class="tri"></span>재질<button type="button" aria-label="재질 닫기">×</button></h2>
            <div class="preview">
              <span class="face big"><i></i></span>
              <input v-model="materialName" type="text" aria-label="재질 이름" disabled>
              <div class="acts">
                <button type="button" class="plain" aria-label="보조 창"><svg width="12" height="18" viewBox="0 0 12 18"><path d="M.5.500h11v17H.5z" fill="#fff" stroke="#333" /><path d="M0 0h12v10H0z" /><path d="M3 5h6" stroke="#fff" stroke-width="2" /><path d="M2 16h8l-4-4z" /></svg></button>
                <button type="button" class="plain" aria-label="재질 만들기"><svg width="22" height="22" viewBox="0 0 22 22"><path d="M3 5l8-4 10 3v11l-8 6-10-4z" fill="#26251c" stroke="#000" /><path d="M4 5l8-3 3 1-8 3zM9 7l8-3 3 1-7 3z" fill="#e0dfc4" /><path d="M13 12l7-4M13 16l7-4" stroke="#a4a289" /><circle cx="6" cy="16" r="5" fill="#fff" stroke="#000" /><path d="M3 16h6M6 13v6" stroke="#000" stroke-width="1.300" /></svg></button>
                <span class="mini"></span>
              </div>
            </div>
            <div class="tabs"><button type="button" class="on">선택</button><button type="button">편집</button>
              <button type="button" class="plain dropper" aria-label="견본 페인트"><svg width="22" height="22" viewBox="0 0 22 22"><path d="M2 20l2-5 8-8 3 3-8 8z" fill="#e9c77c" stroke="#443" /><path d="M9 10l3 3 2-2-3-3z" fill="#eee" /><path d="M11 5l6 6 1-3 3-4c0-3-2-4-4-3l-3 3z" fill="#444" stroke="#111" /></svg></button>
            </div>
            <div class="nav">
              <button type="button" class="plain" aria-label="뒤로"><svg width="16" height="16"><use href="#i-prev" /></svg></button>
              <button type="button" class="plain dim" aria-label="앞으로"><svg width="16" height="16"><use href="#i-next" /></svg></button>
              <button type="button" class="plain" aria-label="모델 내"><svg width="20" height="20"><use href="#i-home" /></svg></button>
              <span class="combo"><select v-model="library" aria-label="라이브러리"><option>유리 및 거울</option></select><span class="arrow"><i class="tri"></i></span></span>
              <button type="button" class="plain" aria-label="세부 정보"><svg width="18" height="18"><use href="#i-detail" /></svg></button>
            </div>
            <div class="list">
              <button v-for="(m, i) in materials" :key="m" type="button" class="swatch" :aria-label="m">
                <svg viewBox="0 0 58 58">
                  <template v-if="flat[i]"><rect width="58" height="58" :fill="flat[i]" /></template>
                  <template v-else-if="i === 0"><path d="M0 0H58V58z" fill="url(#g1)" /><path d="M0 0V58H58z" fill="url(#g2)" /></template>
                  <rect v-else-if="i === 1" width="58" height="58" fill="url(#g3)" />
                  <template v-else-if="i === 2"><rect v-for="s in stripes" :key="s.x" :x="s.x" width="2" height="58" :fill="s.c" /><path d="M0 0H58L0 58z" fill="#456" fill-opacity=".12" /></template>
                  <template v-else-if="i === 3"><rect width="58" height="58" fill="#ededed" /><rect v-for="(s, k) in specks" :key="k" :x="s.x" :y="s.y" :width="s.w" height="1" :fill="s.c" /></template>
                  <rect v-else-if="i === 4" width="58" height="58" filter="url(#cloud)" />
                  <template v-else-if="i === 5"><rect width="58" height="58" fill="#d0effc" /><path d="M-5 15L15-5M-5 34L34-5M-5 53L53-5M-2 68L68-2M15 70L70 15M34 70L70 34M-5 43L15 63M-5 24L34 63M-5 5L53 63M9 0L67 58M28 0L67 39M47 0L67 20" stroke="#8cacb8" fill="none" /></template>
                  <template v-else><rect width="58" height="58" fill="#7d7f7a" /><path d="M19.500 0V58M38.500 0V58M0 19.500H58M0 38.500H58" stroke="#dcd8cc" stroke-width="1.500" /><g v-for="k in blocks" :key="k.x + k.y * 60" :transform="`translate(${k.x} ${k.y})`"><rect width="14" height="14" fill="#9c9997" stroke="#5c5c5a" /><path :d="k.marks" stroke="#5c5356" /></g></template>
                  <path v-if="[2, 4, 5, 6, 8, 9, 10, 11].includes(i)" d="M58 0V58H0z" fill="#fff" :fill-opacity="i === 2 ? 0.12 : i === 10 ? 0.4 : 0.5" />
                </svg>
              </button>
            </div>
            <div class="splitter"></div>
            <div class="caption">선택</div>
            <div class="nav">
              <button type="button" class="plain dim" aria-label="뒤로"><svg width="16" height="16"><use href="#i-prev" /></svg></button>
              <button type="button" class="plain dim" aria-label="앞으로"><svg width="16" height="16"><use href="#i-next" /></svg></button>
              <button type="button" class="plain" aria-label="모델 내"><svg width="20" height="20"><use href="#i-home" /></svg></button>
              <span class="combo focus"><select v-model="library2" aria-label="보조 라이브러리"><option>재질</option></select><span class="arrow"><i class="tri"></i></span></span>
              <button type="button" class="plain" aria-label="세부 정보"><svg width="18" height="18"><use href="#i-detail" /></svg></button>
            </div>
            <div class="folders">
              <button v-for="n in 3" :key="n" type="button" class="folder" :aria-label="'폴더 ' + n"><svg width="36" height="40" viewBox="0 0 36 40"><path d="M1 4l10-1 1 3 8-2v36H4z" fill="#86b3d6" stroke="#4a6f8e" /><path d="M6 10L34 2l-2 38H8z" fill="#b6966e" stroke="#55504a" stroke-width="1.300" /></svg></button>
              <div class="inner"><svg width="12" height="8" viewBox="0 0 12 8"><path d="M1 7l5-5 5 5" fill="none" stroke="#555" stroke-width="2" /></svg><span></span></div>
            </div>
          </div>
          <div class="scroll">
            <svg width="12" height="8" viewBox="0 0 12 8"><path d="M1 7l5-5 5 5" fill="none" stroke="#555" stroke-width="2" /></svg><span></span>
            <svg class="down" width="12" height="8" viewBox="0 0 12 8"><path d="M1 1l5 5 5-5" fill="none" stroke="#555" stroke-width="2" /></svg>
          </div>
        </div>
      </aside>
      <div class="shade"></div>
    </main>

    <footer class="status">
      <svg width="18" height="18" viewBox="0 0 18 18"><circle cx="9" cy="9" r="8" fill="#fff" stroke="#999" stroke-width="1.300" /><path d="M9 3.500c4 0 4 4 1.500 6L9 15 7.500 9.500C5 7.500 5 3.500 9 3.500z" fill="#999" /></svg>
      <svg width="18" height="18" viewBox="0 0 18 18"><circle cx="9" cy="9" r="8" fill="#fff" stroke="#111" stroke-width="1.500" /><circle cx="9" cy="4.500" r="1.600" /><path d="M6.500 7h5v4H10.500v4h-3v-4h-1z" /></svg>
      <svg width="18" height="18" viewBox="0 0 18 18"><circle cx="9" cy="9" r="8" fill="#fff" stroke="#999" stroke-width="1.300" /><circle cx="9" cy="6.500" r="3" fill="#999" /><path d="M3 15c1-6 11-6 12 0-3 3-9 3-12 0z" fill="#999" /></svg>
      <span class="rule"></span>
      <p>끌어서 면을 밀거나 끌거나 값을 입력합니다. &nbsp;Ctrl = 새 시작 면 만들기 토글</p>
      <span class="rule"></span>
      <label for="dist">거리</label>
      <input id="dist" v-model="distance" type="text">
    </footer>
  </div>
</template>

<style>
html, body { background: #fff; }
</style>

<style scoped>
*, *::before { box-sizing: border-box; }
.app {
  display: flex; flex-direction: column; min-height: 100vh; padding: 44px 0; overflow: hidden;
  font-family: "Open Sans", "Noto Sans CJK KR", sans-serif; font-size: 15px; line-height: 20px; color: #111; background: #fff;
}
.defs { position: absolute; }
.symbols { display: none; }
button { padding: 0; border: 0; background: none; font: inherit; color: inherit; }
h1, h2, p { margin: 0; font-weight: 400; }
.tri { display: inline-block; width: 0; border: 5px solid transparent; border-top: 8px solid #000; border-bottom: 0; }

.menubar { display: flex; gap: 15px; height: 21px; padding-left: 6px; font-size: 16px; }
.menubar button { height: 18px; line-height: 18px; }

.toolbar { display: flex; height: 47px; background: #f3f3f3; border-top: 1px solid #eaeaea; border-bottom: 1px solid #b0b0b0; overflow: hidden; }
.bar { display: flex; padding-top: 2px; border-right: 1px solid #bbb; }
.grip { width: 10px; flex: none; margin-bottom: 2px; background: radial-gradient(circle at 5px 2px, #b5b5b5 1px, transparent 2px) 0 0 / 10px 5px repeat-y; }
.bar + .bar .grip { width: 11px; }
.group { display: flex; }
.group + .group::before { content: ""; width: 8px; height: 39px; background: linear-gradient(#888, #888) 3px 0 / 1px 100% no-repeat; }
.tool { display: grid; place-items: center; flex: none; width: 42px; height: 40px; border: 1px solid transparent; }
.tool svg { display: block; width: 32px; height: 32px; overflow: visible; }
.tool.active { background: #c5def5; border-color: #96c3ea; }
.split { display: flex; width: 64px; padding-left: 3px; }
.drop { display: grid; place-items: center; width: 19px; padding-right: 4px; }
.bar .drop .tri { border-width: 6px; border-top-width: 7px; border-bottom: 0; }
.suns { display: flex; gap: 15px; padding: 14px 0 0 7px; }
.bar:nth-of-type(4) { border-right: 0; }
.sun { display: flex; flex-direction: column; width: 146px; }
.sun input { appearance: none; width: 146px; height: 10px; margin: 0; background: none; }
.sun input::-webkit-slider-runnable-track { height: 8px; border: 1px solid #fff; border-top: 2px solid #808080; border-left-color: #999; }
.year::-webkit-slider-runnable-track { background: linear-gradient(90deg, #fff, #f2bd2c 35%, #e01010 66%, #f49a9a 85%, #fff); }
.day::-webkit-slider-runnable-track { background: linear-gradient(90deg, #fff, #8fb0cf 35%, #6f80f0 64%, #4455d0 80%, #050510); }
.sun input::-webkit-slider-thumb { appearance: none; width: 4px; height: 13px; margin-top: -4px; background: #f4f4f4; border: 1px solid #aaa; border-right-color: #555; }
.ticks { display: flex; justify-content: space-between; font: 700 10px/14px "Liberation Sans", "Noto Sans CJK KR", sans-serif; }
.ticks b { width: 11px; text-align: center; font-weight: 700; }
.ticks.time b { width: auto; font-weight: 400; }

.work { position: relative; display: flex; flex: 1; min-height: 0; height: 0; background: #f0f0f0; }
.side { flex: none; width: 88px; }
.palette { display: flex; flex-direction: column; padding: 4px 1px 1px; background: #f4f4f4; border-right: 1px solid #bbb; border-bottom: 1px solid #bbb; }
.hgrip { height: 5px; margin-left: 2px; background: radial-gradient(circle at 2px 3px, #bbb 1px, transparent 2px) 0 0 / 5px 5px; }
.rows { display: flex; flex-wrap: wrap; padding-left: 1px; }
.rows .tool { height: 42px; }
.rows + .rows::before { content: ""; width: 80px; height: 8px; margin-left: 2px; background: linear-gradient(#888, #888) 0 3px / 100% 1px no-repeat; }

.canvas { position: relative; flex: 1; min-width: 0; background: #cececd; border: 1px solid #777; border-left: 2px solid #777; border-right-color: #ddd; border-bottom: 1px solid #ddd; margin-bottom: 1px; }
.scene { position: absolute; inset: 0; width: 100%; height: 100%; }
.keys { position: absolute; right: 15px; bottom: 7px; display: flex; flex-direction: column; align-items: flex-start; gap: 26px; width: 279px; }
kbd { height: 46px; padding: 0 11px 0 7px; border-radius: 5px; background: #a7a7a6; box-shadow: 0 0 0 2px #bdbdbc, 0 0 5px 4px #c6c6c5; color: #e0e0df; font: 700 28px/44px "DejaVu Sans", sans-serif; white-space: nowrap; }
kbd:last-child { background: #9f9f9e; }
.shade { position: absolute; left: 0; right: 610px; bottom: 1px; height: 72px; background: rgba(0, 0, 0, .42); border-top: 1px solid rgba(0, 0, 0, .1); pointer-events: none; }

.tray { display: flex; flex-direction: column; flex: none; width: 302px; padding-left: 6px; }
.traytitle { display: flex; align-items: center; gap: 9px; height: 27px; padding: 0 4px 0 5px; background: linear-gradient(#c3cfdf, #d5e1f0); }
.traytitle h1 { flex: 1; font-size: 15px; line-height: 20px; }
.red { width: 12px; height: 12px; background: #c9505a; color: #fff; font-size: 12px; line-height: 10px; font-weight: 700; }
.traybody { display: flex; flex: 1; min-height: 0; padding-top: 2px; }
.panels { display: flex; flex-direction: column; width: 275px; min-height: 0; background: #f1f1f1; }
.panels h2 { display: flex; align-items: center; flex: none; gap: 8px; height: 22px; padding: 0 3px 2px 9px; font-size: 16px; line-height: 20px; background: linear-gradient(#f2f2f2, #b9b9b9); border-left: 1px solid #aaa; }
.panels h2 button { width: 16px; height: 16px; margin-left: auto; border: 1px solid #999; background: #e9e9e9; font-size: 13px; line-height: 13px; font-weight: 700; }
.plain { display: grid; place-items: center; }
.plain svg { display: block; }
.entity { flex: none; height: 182px; }
.kind { display: flex; align-items: center; height: 32px; margin: 0 28px 8px 2px; padding-left: 9px; border-bottom: 1px solid #a0a0a0; font-size: 12px; position: relative; }
.kind button { position: absolute; right: -20px; top: 7px; }
.fields { display: flex; padding-left: 7px; gap: 5px; }
.faces { display: flex; gap: 2px; }
.face { display: flex; flex-direction: column; justify-content: center; width: 35px; height: 60px; border: 1px solid #999; }
.face i { height: 33px; border-bottom: 1px solid #8f9ba3; background: linear-gradient(to top right, #a5b1ba 50%, #fff 50%); }
.form { display: grid; grid-template-columns: 59px 118px; gap: 4px; align-content: start; font-family: "DejaVu Sans Condensed", "Noto Sans CJK KR", sans-serif; font-size: 13px; line-height: 24px; }
.form label { text-align: right; }
input[type="text"] { width: 100%; min-width: 0; height: 23px; padding: 0 3px; border: 1px solid; border-color: #777 #fff #fff #777; background: #f1f1f1; font: inherit; color: #111; border-radius: 0; }
.combo { position: relative; display: flex; border: 2px solid; border-color: #666 #aaa #aaa #666; background: #fff; }
.combo select { appearance: none; width: 100%; border: 0; padding: 0 3px; background: #fff; font: inherit; color: #000; border-radius: 0; outline: 0; }
.combo.small { height: 24px; line-height: 20px; }
.arrow { position: absolute; top: 0; right: 0; bottom: 0; width: 20px; display: grid; place-items: center; background: #f0f0f0; border: 1px solid; border-color: #eee #777 #777 #ddd; pointer-events: none; }
.arrow .tri { border-width: 4px; border-top-width: 5px; border-bottom: 0; }

.preview { display: flex; flex: none; gap: 3px; height: 93px; padding: 2px 1px 0 2px; border-bottom: 1px solid #999; font-size: 13px; }
.face.big { width: 77px; height: 87px; flex: none; }
.face.big i { height: 75px; }
.preview input[type="text"] { flex: none; width: 160px; color: #777; border-color: #777 #ddd #ddd #777; line-height: 18px; }
.acts { display: flex; flex-direction: column; align-items: center; gap: 10px; width: 26px; margin-left: 2px; padding-top: 3px; }
.mini { flex: none; width: 26px; height: 26px; margin-top: -4px; background: linear-gradient(to top right, #a5b1ba 50%, #fff 50%); }
.tabs { display: flex; align-items: flex-end; flex: none; height: 29px; font-size: 13px; line-height: 18px; }
.tabs button:not(.dropper) { width: 46px; height: 20px; padding-right: 12px; border-top: 1px solid #ddd; border-right: 2px solid #888; }
.tabs .on:not(.dropper) { width: 50px; height: 22px; padding: 0 14px 2px 0; }
.tabs .dropper { margin: 0 4px 3px auto; }
.nav { display: flex; align-items: center; flex: none; height: 36px; padding: 4px 5px 0 8px; border-bottom: 1px solid #999; font-size: 13px; }
.nav .plain { margin-right: 11px; margin-bottom: 5px; }
.nav .plain + .plain + .plain { margin-right: 7px; }
.nav .combo { width: 157px; height: 27px; margin-right: 9px; }
.nav .plain:last-child { margin: 0 0 5px; }
.dim { color: #8a8a8a; }
.list { display: flex; flex-wrap: wrap; align-content: flex-start; gap: 2px; flex: 1; min-height: 0; padding: 2px 0 0 3px; background: #fff; overflow: hidden; }
.swatch { width: 62px; height: 62px; padding: 1px; border: 1px solid #999; background: #fff; }
.swatch svg { display: block; width: 58px; height: 58px; }
.splitter { flex: none; height: 7px; border-top: 3px solid #777; border-bottom: 1px solid #999; }
.caption { flex: none; height: 22px; padding-left: 4px; background: #e6e5e6; border-bottom: 1px solid #999; font-size: 12px; line-height: 20px; }
.focus select { border-bottom: 1px solid #000; margin: 0 24px 1px 3px; padding: 0; }
.folders { display: flex; flex: none; gap: 2px; height: 34px; padding: 2px 0 0 3px; background: #fff; overflow: hidden; }
.folder { flex: none; display: flex; justify-content: center; width: 62px; height: 62px; padding-top: 13px; border: 1px solid #999; }
.inner, .scroll { display: flex; flex-direction: column; align-items: center; background: #f1f1f1; }
.inner { width: 19px; margin: -2px 0 0 auto; padding-top: 8px; gap: 7px; }
.inner span { flex: 1; width: 100%; background: #cdcdcd; }
.scroll { flex: 1; padding: 6px 0 7px 1px; gap: 7px; }
.scroll span { width: 100%; height: 21px; background: #cdcdcd; }
.down { margin-top: auto; }

.status { display: flex; align-items: center; flex: none; height: 26px; gap: 17px; padding: 6px 5px 0 7px; background: #f1f1f1; font-size: 17px; line-height: 24px; overflow: hidden; }
.status svg { flex: none; }
.rule { flex: none; width: 1px; height: 16px; background: #999; }
.status p { flex: 1; margin-left: -7px; white-space: nowrap; }
.status svg + .rule { margin-left: -4px; }
.status label { margin: 0 -8px 0 -9px; }
.status input[type="text"] { width: 250px; height: 28px; flex: none; margin-top: 2px; padding-left: 2px; border: 1px solid #a9b5cc; background: #fff; line-height: 20px; }
</style>
